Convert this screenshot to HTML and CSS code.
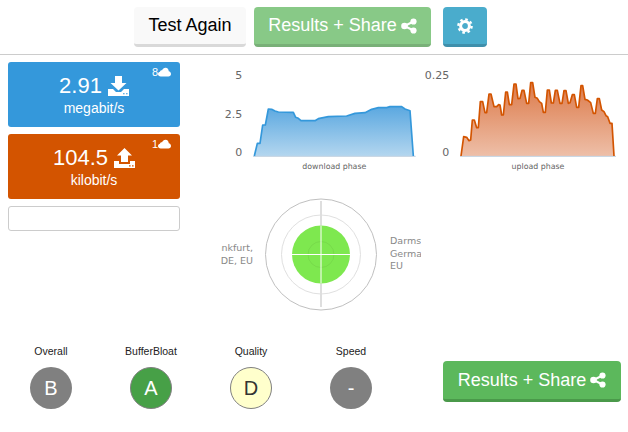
FILE: index.html
```html
<!DOCTYPE html>
<html lang="en">
<head>
    <meta charset="UTF-8">
    <meta name="viewport" content="width=device-width, initial-scale=1.0">
    <title>Speed test results</title>
    <link rel="stylesheet" href="styles.css">
</head>
<body>
    <svg class="icon-defs" width="0" height="0">
        <defs>
            <symbol id="share" viewBox="0 0 16 16">
                <path d="M3.5 8 12.5 3.5M3.5 8 12.5 12.5" stroke="currentColor" stroke-width="2" fill="none"/>
                <circle cx="3.5" cy="8" r="3.3" fill="currentColor"/>
                <circle cx="12.5" cy="3.5" r="3.1" fill="currentColor"/>
                <circle cx="12.5" cy="12.5" r="3.1" fill="currentColor"/>
            </symbol>
            <symbol id="cloud" viewBox="0 0 14 10">
                <path d="M3 9.8C1.2 9.8 0 8.6 0 7.2 0 5.8 1 4.9 2.2 4.7 2.3 3.5 3.3 2.9 4.4 3.2 5 1.4 6.6.4 8.2.5 10.2.6 11.6 2.2 11.6 4.3 13 4.6 14 5.7 14 7.1 14 8.6 12.8 9.8 11.2 9.8Z" fill="currentColor"/>
            </symbol>
            <linearGradient id="blue-fill" x1="0" y1="0" x2="0" y2="1">
                <stop offset="0" stop-color="#5ba8e0"/>
                <stop offset="1" stop-color="#b3d6ef"/>
            </linearGradient>
            <linearGradient id="orange-fill" x1="0" y1="0" x2="0" y2="1">
                <stop offset="0" stop-color="#dc7a4a"/>
                <stop offset="1" stop-color="#eebfa8"/>
            </linearGradient>
        </defs>
    </svg>

    <div class="topbar">
        <button class="btn btn-light">Test Again</button>
        <button class="btn btn-green-faded">Results + Share <svg class="share-icon"><use href="#share"/></svg></button>
        <button class="btn btn-info" aria-label="Settings">
            <svg class="gear-icon" viewBox="0 0 16 16">
                <circle cx="8" cy="8" r="4.4" fill="none" stroke="currentColor" stroke-width="3"/>
                <circle cx="8" cy="8" r="6.6" fill="none" stroke="currentColor" stroke-width="2.4" stroke-dasharray="2.6 2.58"/>
            </svg>
        </button>
    </div>

    <div class="content">
        <div class="left-col">
            <div class="speed-card card-blue">
                <div class="streams">8<svg class="cloud-icon"><use href="#cloud"/></svg></div>
                <div class="speed-value">2.91
                    <svg class="transfer-icon" viewBox="0 0 21 20">
                        <path d="M7 0H14V7H18.5L10.5 14.5 2.5 7H7Z" fill="currentColor"/>
                        <path d="M0 13H5L8 16H13L16 13H21V20H0Z" fill="currentColor"/>
                        <path d="M15 17.2H16.6V18.2H15ZM18 17.2H19.6V18.2H18Z" fill="#3498db"/>
                    </svg>
                </div>
                <div class="speed-unit">megabit/s</div>
            </div>
            <div class="speed-card card-orange">
                <div class="streams">1<svg class="cloud-icon"><use href="#cloud"/></svg></div>
                <div class="speed-value">104.5
                    <svg class="transfer-icon" viewBox="0 0 21 20">
                        <path d="M10.5 0 18 7.5H14V14H7V7.5H3Z" fill="currentColor"/>
                        <path d="M0 13H5V16H16V13H21V20H0Z" fill="currentColor"/>
                        <path d="M15 17.2H16.6V18.6H15ZM18 17.2H19.6V18.6H18Z" fill="#d35400"/>
                    </svg>
                </div>
                <div class="speed-unit">kilobit/s</div>
            </div>
            <div class="empty-box"></div>
        </div>

        <div class="middle-col">
            <div class="charts">
                <!-- chart coordinates are 3x the screen pixels -->
                <svg class="chart chart-down" viewBox="0 0 630 360">
                    <text class="axis-label" x="82" y="56">5</text>
                    <text class="axis-label" x="82" y="174">2.5</text>
                    <text class="axis-label" x="82" y="288">0</text>
                    <polygon fill="url(#blue-fill)" points="118,288 127,250 135,250 143,195 151,195 160,147 170,148 180,153 190,156 235,157 242,172 250,175 258,182 300,182 310,176 340,170 395,168 420,160 450,158 470,148 490,143 515,143 525,140 560,140 570,147 585,152 595,288"/>
                    <line class="baseline" x1="114" y1="289" x2="602" y2="289"/>
                    <polyline class="line-blue" points="118,288 127,250 135,250 143,195 151,195 160,147 170,148 180,153 190,156 235,157 242,172 250,175 258,182 300,182 310,176 340,170 395,168 420,160 450,158 470,148 490,143 515,143 525,140 560,140 570,147 585,152 595,288"/>
                    <text class="phase-label" x="358" y="326">download phase</text>
                </svg>
                <svg class="chart chart-up" viewBox="0 0 624 360">
                    <text class="axis-label" x="88" y="56">0.25</text>
                    <text class="axis-label" x="88" y="288">0</text>
                    <polygon fill="url(#orange-fill)" points="123,288 131,230 140,232 147,242 152,240 157,180 163,180 170,203 175,203 181,125 188,125 195,158 200,158 207,102 213,102 222,140 230,140 236,134 240,135 245,165 250,165 257,96 262,96 268,134 275,134 282,72 288,72 294,116 300,115 306,91 312,91 320,130 326,130 332,68 338,68 345,112 352,115 358,125 365,130 370,157 376,157 382,90 388,90 394,129 400,129 406,91 412,91 420,130 426,130 432,92 438,92 445,130 450,128 457,104 463,104 470,142 476,142 483,77 488,77 495,118 502,120 512,128 520,160 526,160 532,116 538,116 545,150 552,155 558,167 563,170 570,190 576,190 582,288"/>
                    <line class="baseline" x1="120" y1="289" x2="588" y2="289"/>
                    <polyline class="line-orange" points="123,288 131,230 140,232 147,242 152,240 157,180 163,180 170,203 175,203 181,125 188,125 195,158 200,158 207,102 213,102 222,140 230,140 236,134 240,135 245,165 250,165 257,96 262,96 268,134 275,134 282,72 288,72 294,116 300,115 306,91 312,91 320,130 326,130 332,68 338,68 345,112 352,115 358,125 365,130 370,157 376,157 382,90 388,90 394,129 400,129 406,91 412,91 420,130 426,130 432,92 438,92 445,130 450,128 457,104 463,104 470,142 476,142 483,77 488,77 495,118 502,120 512,128 520,160 526,160 532,116 538,116 545,150 552,155 558,167 563,170 570,190 576,190 582,288"/>
                    <text class="phase-label" x="354" y="326">upload phase</text>
                </svg>
            </div>
            <svg class="radar" viewBox="0 0 200 125">
                <circle class="ring-outer" cx="100" cy="64.5" r="55.5"/>
                <circle class="ring-mid" cx="100" cy="64.5" r="39.5"/>
                <line class="radar-axis" x1="100" y1="11" x2="100" y2="117"/>
                <circle class="radar-dot" cx="100" cy="64.5" r="29"/>
                <circle class="ring-inner" cx="100" cy="64.5" r="13"/>
                <line class="radar-cross" x1="71" y1="64.5" x2="129" y2="64.5"/>
                <line class="radar-cross" x1="100" y1="35.5" x2="100" y2="93.5"/>
                <text class="place-left" x="32" y="61">Frankfurt,</text>
                <text class="place-left" x="32" y="73.7">DE, EU</text>
                <text class="place-right" x="169" y="54">Darmstadt,</text>
                <text class="place-right" x="169" y="66.7">Germany,</text>
                <text class="place-right" x="169" y="79.3">EU</text>
            </svg>
        </div>
    </div>

    <div class="bottom">
        <div class="grades">
            <div class="grade">
                <div class="grade-title">Overall</div>
                <div class="grade-circle grade-grey">B</div>
            </div>
            <div class="grade">
                <div class="grade-title">BufferBloat</div>
                <div class="grade-circle grade-green">A</div>
            </div>
            <div class="grade">
                <div class="grade-title">Quality</div>
                <div class="grade-circle grade-yellow">D</div>
            </div>
            <div class="grade">
                <div class="grade-title">Speed</div>
                <div class="grade-circle grade-grey">-</div>
            </div>
        </div>
        <button class="btn btn-green">Results + Share <svg class="share-icon"><use href="#share"/></svg></button>
    </div>
</body>
</html>
```
FILE: styles.css
```css
html, body {
    margin: 0;
    padding: 0;
}
body {
    position: relative;
    font-family: 'Liberation Sans', Arial, sans-serif;
    background-color: white;
    color: #333;
    height: 432px;
    overflow: hidden;
}
.icon-defs {
    display: block;
    height: 0;
}

/* buttons */
.topbar {
    display: flex;
    height: 47px;
    padding: 7px 0 0 134px;
    border-bottom: 1px solid #ccc;
}
.btn {
    display: flex;
    align-items: center;
    justify-content: center;
    gap: 4px;
    height: 40px;
    padding: 0;
    border: none;
    border-bottom: 3px solid transparent;
    border-radius: 4px;
    font-family: inherit;
    font-size: 18px;
    cursor: pointer;
    white-space: nowrap;
}
.btn-light {
    width: 112px;
    color: black;
    background-color: #f9f9f9;
    border-bottom-color: #d9d9d9;
}
.btn-green-faded {
    width: 177px;
    margin-left: 8px;
    color: white;
    background-color: #88c987;
    border-bottom-color: #79b078;
}
.btn-info {
    width: 44px;
    margin-left: 12px;
    color: white;
    background-color: #4aaccc;
    border-bottom-color: #3f8fab;
}
.btn-green {
    width: 178px;
    height: 41px;
    color: white;
    background-color: #5cb85c;
    border-bottom-color: #4a994a;
}
.share-icon {
    width: 16px;
    height: 16px;
}
.gear-icon {
    width: 16px;
    height: 16px;
}

/* main area */
.content {
    display: flex;
}
.left-col {
    display: flex;
    flex-direction: column;
    gap: 7px;
    width: 172px;
    margin-left: 8px;
    padding-top: 7px;
}
.speed-card {
    position: relative;
    height: 65px;
    display: flex;
    flex-direction: column;
    align-items: center;
    justify-content: center;
    color: white;
    border-radius: 3px;
}
.card-blue {
    background-color: #3498db;
}
.card-orange {
    background-color: #d35400;
}
.speed-value {
    display: flex;
    align-items: center;
    gap: 6px;
    font-size: 22px;
    line-height: 27px;
}
.speed-unit {
    font-size: 14px;
    line-height: 18px;
}
.transfer-icon {
    width: 21px;
    height: 20px;
}
.streams {
    position: absolute;
    top: 4px;
    right: 9px;
    display: flex;
    align-items: center;
    font-size: 11px;
    line-height: 12px;
}
.cloud-icon {
    width: 13px;
    height: 10px;
}
.empty-box {
    height: 23px;
    border: 1px solid #ccc;
    border-radius: 3px;
}

/* charts */
.middle-col {
    margin-left: 35px;
    padding-top: 5px;
}
.charts {
    display: flex;
}
.chart {
    display: block;
    height: 120px;
}
.chart-down {
    width: 210px;
}
.chart-up {
    width: 208px;
    margin-left: -5px;
}
.axis-label {
    font-family: 'DejaVu Sans', Verdana, sans-serif;
    font-size: 33px;
    fill: #666;
    text-anchor: end;
}
.phase-label {
    font-family: 'DejaVu Sans', Verdana, sans-serif;
    font-size: 23.5px;
    fill: #666;
    text-anchor: middle;
}
.baseline {
    stroke: #c0d0e0;
    stroke-width: 3;
}
.line-blue,
.line-orange {
    fill: none;
    stroke-width: 5;
    stroke-linejoin: round;
}
.line-blue {
    stroke: #3498db;
}
.line-orange {
    stroke: #d35400;
}

/* radar */
.radar {
    display: block;
    width: 200px;
    height: 125px;
    margin: 10px 0 0 6px;
}
.ring-outer,
.ring-mid,
.ring-inner {
    fill: none;
    stroke-width: 1;
}
.ring-outer {
    stroke: #c0c0c0;
}
.ring-mid {
    stroke: #e0e0e0;
}
.ring-inner {
    stroke: rgba(0, 0, 0, 0.06);
}
.radar-axis {
    stroke: #dedede;
    stroke-width: 2;
}
.radar-dot {
    fill: #7ee84f;
}
.radar-cross {
    stroke: white;
    stroke-width: 1;
}
.place-left,
.place-right {
    font-family: 'DejaVu Sans', Verdana, sans-serif;
    font-size: 9.5px;
    fill: #888;
}
.place-left {
    text-anchor: end;
}

/* bottom row */
.bottom {
    position: absolute;
    top: 345px;
    left: 0;
    right: 0;
    display: flex;
}
.grades {
    display: flex;
    margin-left: 1px;
}
.grade {
    width: 100px;
    display: flex;
    flex-direction: column;
    align-items: center;
}
.grade-title {
    font-size: 10.5px;
    line-height: 12px;
    color: #222;
    margin-bottom: 10px;
}
.grade-circle {
    width: 42px;
    height: 42px;
    box-sizing: border-box;
    border-radius: 50%;
    display: flex;
    align-items: center;
    justify-content: center;
    font-size: 20px;
    color: white;
}
.grade-grey {
    background-color: #808080;
}
.grade-green {
    background-color: #47a047;
    border: 1px solid #808080;
}
.grade-yellow {
    background-color: #ffffcc;
    border: 1px solid #808080;
    color: #333;
}
.bottom .btn-green {
    margin: 16px 0 0 42px;
}
```
